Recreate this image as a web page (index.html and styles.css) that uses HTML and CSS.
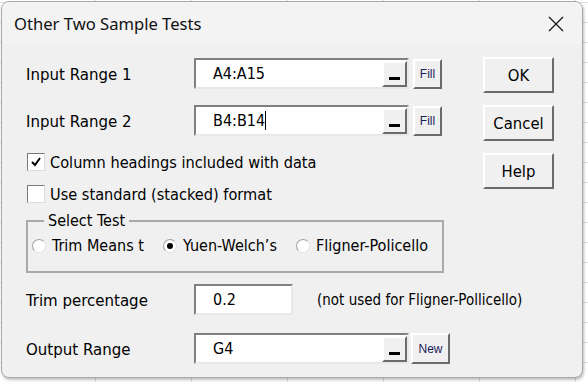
FILE: index.html
```html
<!DOCTYPE html>
<html lang="en">
<head>
    <meta charset="UTF-8">
    <title>Other Two Sample Tests</title>
    <link rel="stylesheet" href="styles.css">
</head>
<body>
    <div class="dialog">
        <div class="titlebar">
            <div class="title">Other Two Sample Tests</div>
            <svg class="close" width="16" height="16" viewBox="0 0 16 16">
                <path d="M1 1 L15 15 M15 1 L1 15" stroke="#1a1a1a" stroke-width="1.3" fill="none"/>
            </svg>
        </div>

        <div class="content">
            <div class="form">
                <div class="row row-first">
                    <div class="label">Input Range 1</div>
                    <div class="field field-wide">
                        <div class="field-text">A4:A15</div>
                        <div class="ref-btn"><span class="bar"></span></div>
                    </div>
                    <div class="small-btn btn-fill">Fill</div>
                </div>

                <div class="row row-second">
                    <div class="label">Input Range 2</div>
                    <div class="field field-wide">
                        <div class="field-text">B4:B14<span class="caret"></span></div>
                        <div class="ref-btn"><span class="bar"></span></div>
                    </div>
                    <div class="small-btn btn-fill">Fill</div>
                </div>

                <div class="check-row check-first">
                    <span class="checkbox">
                        <svg width="12" height="12" viewBox="0 0 12 12">
                            <path d="M2 6 L5 9 L10 2" stroke="#000" stroke-width="2" fill="none"/>
                        </svg>
                    </span>
                    <span>Column headings included with data</span>
                </div>

                <div class="check-row check-second">
                    <span class="checkbox"></span>
                    <span>Use standard (stacked) format</span>
                </div>

                <fieldset class="group">
                    <legend>Select Test</legend>
                    <div class="radios">
                        <div class="radio-item item-1"><span class="radio"></span>Trim Means t</div>
                        <div class="radio-item item-2"><span class="radio checked"></span>Yuen-Welch’s</div>
                        <div class="radio-item"><span class="radio"></span>Fligner-Policello</div>
                    </div>
                </fieldset>

                <div class="row row-trim">
                    <div class="label">Trim percentage</div>
                    <div class="field field-short">
                        <div class="field-text">0.2</div>
                    </div>
                    <div class="note">(not used for Fligner-Pollicello)</div>
                </div>

                <div class="row row-output">
                    <div class="label">Output Range</div>
                    <div class="field field-wide">
                        <div class="field-text">G4</div>
                        <div class="ref-btn"><span class="bar"></span></div>
                    </div>
                    <div class="small-btn btn-new">New</div>
                </div>
            </div>

            <div class="side">
                <div class="cmd-btn">OK</div>
                <div class="cmd-btn">Cancel</div>
                <div class="cmd-btn">Help</div>
            </div>
        </div>
    </div>
</body>
</html>
```

FILE: styles.css
```css
* {
    margin: 0;
    padding: 0;
    box-sizing: border-box;
}

body {
    width: 588px;
    height: 382px;
    overflow: hidden;
    background-color: #fff;
    background-image:
        repeating-linear-gradient(90deg, transparent 0 95px, #dcdcdc 95px 96px),
        repeating-linear-gradient(0deg, transparent 0 19px, #dcdcdc 19px 20px);
    font-family: "DejaVu Sans Condensed", "DejaVu Sans", sans-serif;
    font-size: 16px;
    color: #000;
}

.dialog {
    margin: 1px 0 0 1px;
    width: 582px;
    height: 377px;
    background: #f0f0f0;
    border: 1px solid #a8a8a8;
    border-radius: 8px;
    box-shadow: 1px 2px 3px rgba(0, 0, 0, 0.25);
    overflow: hidden;
}

.titlebar {
    height: 43px;
    background: #f3f3f3;
    display: flex;
    align-items: center;
    justify-content: space-between;
    padding: 0 18px 0 12px;
}

.title {
    font-family: "Noto Sans", "Open Sans", sans-serif;
    font-size: 16.6px;
    color: #111;
}

.close {
    display: block;
}

.content {
    display: flex;
    padding-left: 24px;
}

.form {
    width: 426px;
    flex-shrink: 0;
}

.row {
    display: flex;
    align-items: center;
    height: 31px;
}

.row-first {
    margin-top: 13px;
}

.row-second {
    margin-top: 16px;
}

.label {
    width: 168px;
    flex-shrink: 0;
    font-size: 16.7px;
}

.field {
    flex-shrink: 0;
    height: 31px;
    background: #fff;
    border: 2px solid;
    border-color: #808080 #e8e8e8 #e8e8e8 #808080;
    display: flex;
    align-items: flex-start;
}

.field-wide {
    width: 215px;
}

.field-short {
    width: 99px;
}

.field-text {
    flex: 1;
    padding-left: 17px;
    line-height: 27px;
    font-size: 16px;
    color: #000;
}

.caret {
    display: inline-block;
    width: 1px;
    height: 19px;
    background: #000;
    vertical-align: -4px;
}

.ref-btn {
    width: 25px;
    height: 26px;
    margin-top: 1px;
    background: #f0f0f0;
    border: 2px solid;
    border-color: #fff #6b6b6b #6b6b6b #fff;
    display: flex;
    align-items: flex-end;
    justify-content: center;
    padding-bottom: 5px;
}

.bar {
    width: 11px;
    height: 3px;
    background: #000;
}

.small-btn {
    flex-shrink: 0;
    height: 30px;
    background: #f0f0f0;
    border: 2px solid;
    border-color: #fff #6b6b6b #6b6b6b #fff;
    font-family: "Liberation Sans", Arial, sans-serif;
    font-size: 12px;
    color: #1c1c5e;
    display: flex;
    align-items: center;
    justify-content: center;
}

.btn-fill {
    width: 29px;
    margin-left: 4px;
}

.btn-new {
    width: 39px;
    margin-left: 2px;
    height: 31px;
}

.check-row {
    display: flex;
    align-items: center;
    height: 18px;
    padding-left: 1px;
    gap: 5px;
    font-size: 16.2px;
}

.check-first {
    margin-top: 17px;
}

.check-second {
    margin-top: 14px;
}

.checkbox {
    width: 18px;
    height: 18px;
    background: #fff;
    border: 1px solid #7a7a7a;
    border-right-color: #dcdcdc;
    border-bottom-color: #dcdcdc;
    display: flex;
    align-items: center;
    justify-content: center;
}

.group {
    margin-top: 9px;
    width: 418px;
    height: 61px;
    border: 2px solid #a9a9a9;
    padding: 6px 0 0 4px;
}

.group legend {
    margin-left: 12px;
    padding: 0 4px;
    font-size: 16px;
    line-height: 18px;
}

.radios {
    display: flex;
    font-size: 16px;
}

.radio-item {
    display: flex;
    align-items: center;
    gap: 6px;
}

.item-1 {
    width: 131px;
}

.item-2 {
    width: 133px;
}

.radio {
    width: 14px;
    height: 14px;
    border-radius: 50%;
    background: #fff;
    border: 1px solid #a0a0a0;
    border-right-color: #e4e4e4;
    border-bottom-color: #e4e4e4;
    display: flex;
    align-items: center;
    justify-content: center;
}

.radio.checked::after {
    content: '';
    width: 6px;
    height: 6px;
    border-radius: 50%;
    background: #000;
}

.row-trim {
    margin-top: 11px;
}

.note {
    margin-left: 24px;
    white-space: nowrap;
    font-size: 15px;
}

.row-output {
    margin-top: 18px;
}

.side {
    margin-left: 31px;
    padding-top: 12px;
    display: flex;
    flex-direction: column;
    gap: 12px;
}

.cmd-btn {
    width: 71px;
    height: 36px;
    background: #f0f0f0;
    border: 2px solid;
    border-color: #fff #6b6b6b #6b6b6b #fff;
    display: flex;
    align-items: center;
    justify-content: center;
    font-size: 16.5px;
}
```
